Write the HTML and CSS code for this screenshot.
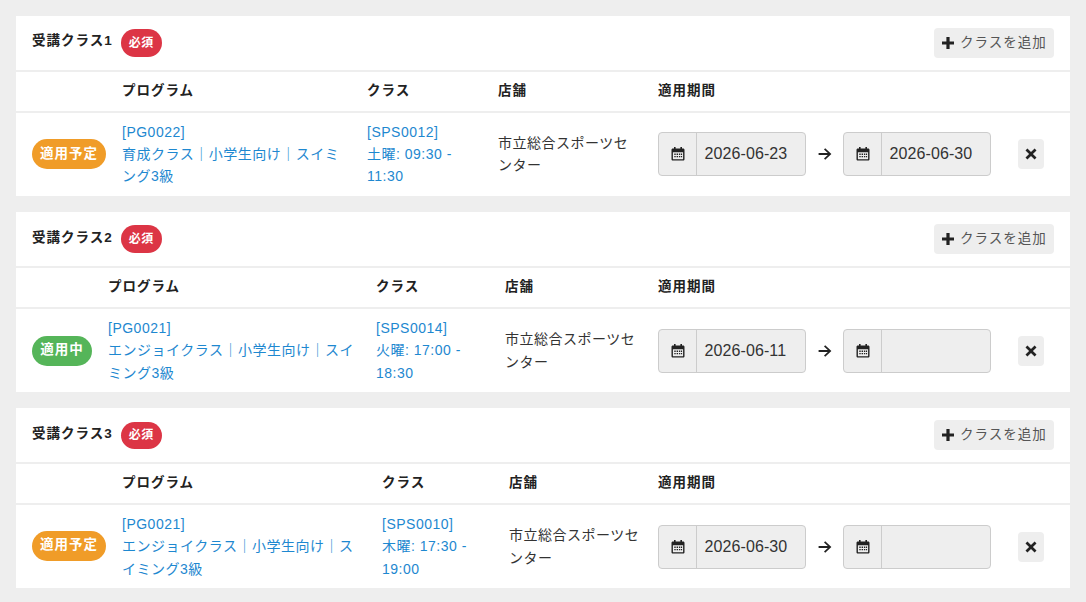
FILE: index.html
```html
<!DOCTYPE html>
<html lang="ja">
<head>
<meta charset="utf-8">
<title>受講クラス</title>
<link rel="stylesheet" href="styles.css">
</head>
<body>
<svg class="defs" width="0" height="0" aria-hidden="true">
  <symbol id="i-cal" viewBox="0 0 14 14">
    <path fill="currentColor" fill-rule="evenodd" d="M3 0h1.6v1.6h4.8V0H11v1.6h1.2c.7 0 1.3.6 1.3 1.3v9.3c0 .7-.6 1.3-1.3 1.3H1.8c-.7 0-1.3-.6-1.3-1.3V2.9c0-.7.6-1.3 1.3-1.3H3zM1.9 5.2v6.7c0 .2.1.3.3.3h9.6c.2 0 .3-.1.3-.3V5.2z"/>
    <path fill="currentColor" d="M3.3 6.6h1.4V8H3.3zM5.6 6.6H7V8H5.6zM7.9 6.6h1.4V8H7.9zM10 6.6h1.1V8H10zM3.3 9h1.4v1.3H3.3zM5.6 9H7v1.3H5.6zM7.9 9h1.4v1.3H7.9zM10 9h1.1v1.3H10z"/>
  </symbol>
  <symbol id="i-arrow" viewBox="0 0 14 14">
    <path fill="currentColor" d="M7.2 1.2 13.4 7l-6.2 5.8-1.2-1.3 3.8-3.5H.6V6.1h9.2L6 2.5z"/>
  </symbol>
  <symbol id="i-plus" viewBox="0 0 14 14">
    <path fill="currentColor" d="M5.4 1h3.2v4.4H13v3.2H8.6V13H5.4V8.6H1V5.4h4.4z"/>
  </symbol>
  <symbol id="i-x" viewBox="0 0 14 14">
    <path fill="currentColor" d="M3.4 1.5 7 5.1l3.6-3.6 1.9 1.9L8.9 7l3.6 3.6-1.9 1.9L7 8.9l-3.6 3.6-1.9-1.9L5.1 7 1.5 3.4z"/>
  </symbol>
</svg>
<main class="page">
  <section class="card cols-a">
    <header class="card-head">
      <h2 class="card-title">受講クラス1</h2>
      <span class="badge-required">必須</span>
      <button class="btn-add" type="button"><svg class="icon-plus"><use href="#i-plus"/></svg>クラスを追加</button>
    </header>
    <div class="grid-row head-row">
      <span></span><span>プログラム</span><span>クラス</span><span>店舗</span><span>適用期間</span>
    </div>
    <div class="grid-row body-row">
      <div><span class="pill pill-planned">適用予定</span></div>
      <div class="link"><a>[PG0022]</a><br><a>育成クラス&#xFF5C;小学生向け&#xFF5C;スイミング3級</a></div>
      <div class="link"><a>[SPS0012]</a><br><a>土曜: 09:30 - 11:30</a></div>
      <div class="shop">市立総合スポーツセンター</div>
      <div class="period">
        <div class="date"><span class="date-addon"><svg class="icon-cal"><use href="#i-cal"/></svg></span><span class="date-value">2026-06-23</span></div>
        <svg class="icon-arrow"><use href="#i-arrow"/></svg>
        <div class="date"><span class="date-addon"><svg class="icon-cal"><use href="#i-cal"/></svg></span><span class="date-value">2026-06-30</span></div>
        <button class="btn-remove" type="button" aria-label="削除"><svg class="icon-x"><use href="#i-x"/></svg></button>
      </div>
    </div>
  </section>
  <section class="card cols-b">
    <header class="card-head">
      <h2 class="card-title">受講クラス2</h2>
      <span class="badge-required">必須</span>
      <button class="btn-add" type="button"><svg class="icon-plus"><use href="#i-plus"/></svg>クラスを追加</button>
    </header>
    <div class="grid-row head-row">
      <span></span><span>プログラム</span><span>クラス</span><span>店舗</span><span>適用期間</span>
    </div>
    <div class="grid-row body-row">
      <div><span class="pill pill-active">適用中</span></div>
      <div class="link"><a>[PG0021]</a><br><a>エンジョイクラス&#xFF5C;小学生向け&#xFF5C;スイミング3級</a></div>
      <div class="link"><a>[SPS0014]</a><br><a>火曜: 17:00 - 18:30</a></div>
      <div class="shop">市立総合スポーツセンター</div>
      <div class="period">
        <div class="date"><span class="date-addon"><svg class="icon-cal"><use href="#i-cal"/></svg></span><span class="date-value">2026-06-11</span></div>
        <svg class="icon-arrow"><use href="#i-arrow"/></svg>
        <div class="date"><span class="date-addon"><svg class="icon-cal"><use href="#i-cal"/></svg></span><span class="date-value"></span></div>
        <button class="btn-remove" type="button" aria-label="削除"><svg class="icon-x"><use href="#i-x"/></svg></button>
      </div>
    </div>
  </section>
  <section class="card cols-c">
    <header class="card-head">
      <h2 class="card-title">受講クラス3</h2>
      <span class="badge-required">必須</span>
      <button class="btn-add" type="button"><svg class="icon-plus"><use href="#i-plus"/></svg>クラスを追加</button>
    </header>
    <div class="grid-row head-row">
      <span></span><span>プログラム</span><span>クラス</span><span>店舗</span><span>適用期間</span>
    </div>
    <div class="grid-row body-row">
      <div><span class="pill pill-planned">適用予定</span></div>
      <div class="link"><a>[PG0021]</a><br><a>エンジョイクラス&#xFF5C;小学生向け&#xFF5C;スイミング3級</a></div>
      <div class="link"><a>[SPS0010]</a><br><a>木曜: 17:30 - 19:00</a></div>
      <div class="shop">市立総合スポーツセンター</div>
      <div class="period">
        <div class="date"><span class="date-addon"><svg class="icon-cal"><use href="#i-cal"/></svg></span><span class="date-value">2026-06-30</span></div>
        <svg class="icon-arrow"><use href="#i-arrow"/></svg>
        <div class="date"><span class="date-addon"><svg class="icon-cal"><use href="#i-cal"/></svg></span><span class="date-value"></span></div>
        <button class="btn-remove" type="button" aria-label="削除"><svg class="icon-x"><use href="#i-x"/></svg></button>
      </div>
    </div>
  </section>
</main>
</body>
</html>
```
FILE: styles.css
```css
* { box-sizing: border-box; }
html, body { margin: 0; padding: 0; }
body {
  background: #eee;
  color: #333;
  font-family: "Liberation Sans", "Noto Sans CJK JP", sans-serif;
  font-size: 13.5px;
  letter-spacing: 1px;
  line-height: 22.4px;
  width: 1086px;
  height: 602px;
  overflow: hidden;
}
.defs { position: absolute; }
.page { display: flex; flex-direction: column; gap: 16px; padding: 16px; }
.card { background: #fff; height: 180px; display: flex; flex-direction: column; }
.card-head {
  height: 56px;
  flex: none;
  display: flex;
  align-items: center;
  padding: 0 16px;
  border-bottom: 2px solid #eee;
}
.card-title { margin: 0 8px 0 0; padding-bottom: 4px; font-size: 13.5px; font-weight: 700; color: #222; line-height: 20px; }
.cols-b .card-title { padding-bottom: 3px; }
.cols-c .card-title { padding-bottom: 2px; }
.badge-required {
  width: 41px;
  height: 28px;
  display: flex;
  align-items: center;
  justify-content: center;
  background: #dc3545;
  color: #fff;
  border-radius: 14px;
  font-size: 12px;
  font-weight: 700;
  letter-spacing: .5px;
}
.cols-c .badge-required { height: 27px; margin-top: 1px; }
.btn-add {
  margin-left: auto;
  width: 120px;
  height: 30px;
  border: 0;
  border-radius: 4px;
  background: #eee;
  color: #555;
  font: inherit;
  letter-spacing: 1px;
  display: flex;
  align-items: center;
  justify-content: flex-start;
  gap: 5px;
  padding: 0 0 0 7px;
}
.icon-plus { width: 14px; height: 14px; color: #222; }
.grid-row {
  display: grid;
  grid-template-columns: var(--cols);
  column-gap: 16px;
  padding: 0 16px;
  align-items: center;
}
.cols-a { --cols: 74px 229px 115px 144px 1fr; }
.cols-b { --cols: 60px 252px 113px 137px 1fr; }
.cols-c { --cols: 74px 244px 111px 133px 1fr; }
.cols-a .body-row { padding-bottom: 1px; }
.head-row {
  height: 41px;
  flex: none;
  border-bottom: 2px solid #eee;
  font-weight: 700;
  color: #222;
}
.body-row { flex: 1; }
.pill {
  display: inline-flex;
  align-items: center;
  justify-content: center;
  width: 100%;
  height: 30px;
  border-radius: 15px;
  color: #fff;
  font-weight: 700;
  vertical-align: middle;
}
.cols-c .pill { margin-bottom: 2px; }
.pill-planned { background: #f09c28; }
.pill-active { background: #55b559; }
.link { color: #1e88d0; font-size: 14px; letter-spacing: .5px; }
.cols-a .link { padding-top: .4px; }
.shop { font-size: 14px; letter-spacing: .5px; }
.period { display: flex; align-items: center; }
.date {
  width: 148px;
  height: 44px;
  flex: none;
  display: flex;
  background: #eee;
  border: 1px solid #ccc;
  border-radius: 4px;
}
.date-addon {
  width: 38px;
  flex: none;
  display: flex;
  align-items: center;
  justify-content: center;
  border-right: 1px solid #ccc;
}
.date-value { flex: 1; padding-left: 7.5px; font-size: 16px; line-height: 42px; letter-spacing: .1px; color: #333; }
.icon-cal { width: 14px; height: 14px; color: #222; }
.icon-arrow { width: 14px; height: 14px; color: #222; margin: 0 11px 0 12px; flex: none; }
.btn-remove {
  margin-left: 27px;
  width: 26px;
  height: 30px;
  border: 0;
  border-radius: 4px;
  background: #eee;
  color: #222;
  padding: 0;
  display: flex;
  align-items: center;
  justify-content: center;
}
.icon-x { width: 14px; height: 14px; }
```
